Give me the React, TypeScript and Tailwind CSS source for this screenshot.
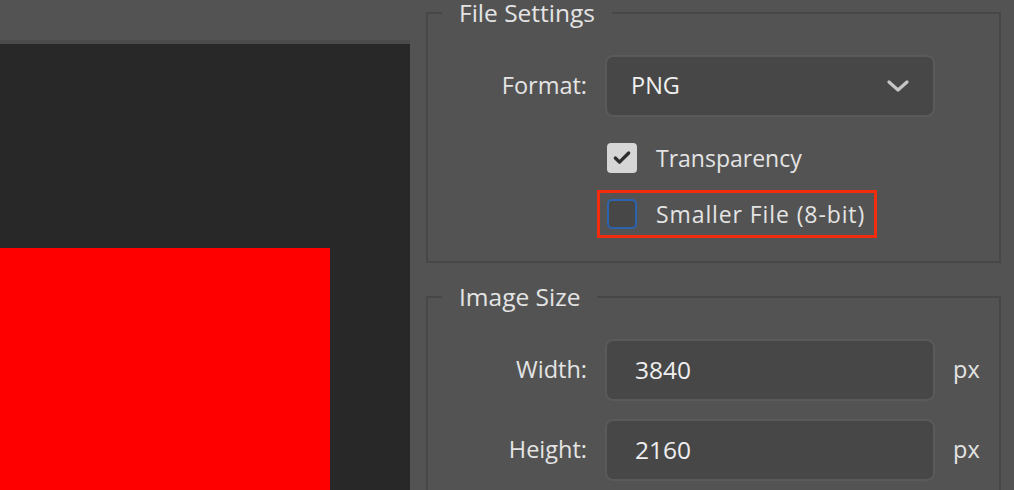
import { Check } from 'lucide-react';

const font = { fontFamily: '"Open Sans", "Noto Sans", sans-serif' };

const Row = ({ label, children }: { label: string; children: React.ReactNode }) => (
    <div className="flex items-center">
        <div className="w-[159px] text-right text-[23.5px] text-[#e4e4e4]">{label}</div>
        <div className="ml-[18px] flex items-center">{children}</div>
    </div>
);

const Field = ({ value }: { value: string }) => (
    <div className="flex h-[62px] w-[330px] items-center rounded-lg border-2 border-[#5a5a5a] bg-[#474747] pl-[28px] text-[24.5px] text-[#efefef]">
        {value}
    </div>
);

const App = () => {
    return (
        <div className="flex h-[490px] w-[1014px] overflow-hidden bg-[#535353]" style={font}>
            <div className="flex w-[410px] flex-col">
                <div className="h-[40px] shrink-0 bg-[#535353]"></div>
                <div className="h-[4px] shrink-0 bg-[#4a4a4a]"></div>
                <div className="min-h-0 flex-1 overflow-hidden bg-[#282828] pt-[204px]">
                    <div className="h-[300px] w-[330px] bg-[#ff0000]"></div>
                </div>
            </div>

            <div className="flex-1 pl-[16px] pr-[13px]">
                <fieldset className="border-2 border-[#474747] pb-[23px] pt-[29px]">
                    <legend className="ml-[14px] px-[17px] text-[24.5px] leading-[26px] text-[#e4e4e4]">File Settings</legend>
                    <Row label="Format:">
                        <div className="flex h-[62px] w-[330px] items-center justify-between rounded-lg border-2 border-[#5a5a5a] bg-[#474747] pl-[24px] pr-[24px] text-[23.5px] text-[#efefef]">
                            <span>PNG</span>
                            <svg width="22" height="14" viewBox="0 0 22 14" fill="none">
                                <path d="M2 3 L11 11 L20 3" stroke="#c6c6c6" strokeWidth="3.2" strokeLinecap="round" strokeLinejoin="round" />
                            </svg>
                        </div>
                    </Row>
                    <div className="ml-[169px] mt-[17px] flex flex-col gap-[8px]">
                        <div className="flex h-[48px] w-[280px] items-center border-[3px] border-transparent pl-[7px]">
                            <div className="flex h-[30px] w-[30px] items-center justify-center rounded-[4px] bg-[#d6d6d6]">
                                <Check size={20} strokeWidth={4} color="#2e2e2e" />
                            </div>
                            <span className="ml-[19px] text-[23px] text-[#e4e4e4]">Transparency</span>
                        </div>
                        <div className="flex h-[48px] w-[280px] items-center border-[3px] border-[#f22c0c] pl-[7px]">
                            <div className="h-[30px] w-[30px] rounded-[5px] border-2 border-[#2c63b0] bg-[#474747]"></div>
                            <span className="ml-[19px] text-[23px] tracking-[0.9px] text-[#e4e4e4]">Smaller File (8-bit)</span>
                        </div>
                    </div>
                </fieldset>

                <fieldset className="mt-[21px] border-2 border-[#474747] pb-[24px] pt-[29px]">
                    <legend className="ml-[14px] px-[17px] text-[24.5px] leading-[26px] text-[#e4e4e4]">Image Size</legend>
                    <div className="flex flex-col gap-[18px]">
                        <Row label="Width:">
                            <Field value="3840" />
                            <span className="ml-[18px] text-[23.5px] text-[#e4e4e4]">px</span>
                        </Row>
                        <Row label="Height:">
                            <Field value="2160" />
                            <span className="ml-[18px] text-[23.5px] text-[#e4e4e4]">px</span>
                        </Row>
                    </div>
                </fieldset>
            </div>
        </div>
    );
};

export default App;
